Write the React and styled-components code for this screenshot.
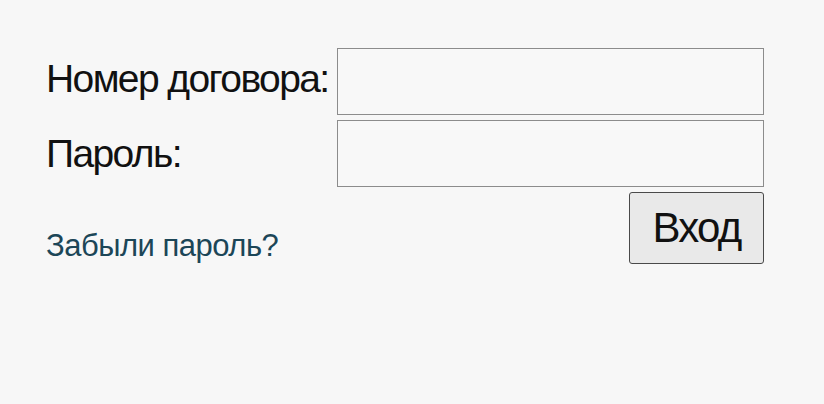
import React from 'react';
import styled, { createGlobalStyle } from 'styled-components';

const GlobalStyle = createGlobalStyle`
  html, body {
    margin: 0;
    padding: 0;
    background: #f7f7f7;
  }
  body {
    font-family: "Liberation Sans", Arial, sans-serif;
  }
`;

const Page = styled.div`
  width: 824px;
  height: 404px;
  box-sizing: border-box;
  padding: 48px 0 0 46px;
  background: #f7f7f7;
`;

const Form = styled.form`
  display: grid;
  grid-template-columns: 291px 427px;
  grid-template-rows: 67px 67px 72px;
  row-gap: 5px;
  margin: 0;
`;

const Label = styled.label`
  align-self: center;
  font-size: 39px;
  letter-spacing: -1.6px;
  color: #111;
  white-space: nowrap;
  margin-top: ${(p) => p.$offset || 0}px;
`;

const Input = styled.input`
  box-sizing: border-box;
  width: 100%;
  height: 100%;
  border: 1px solid #8c8c8c;
  background: #f8f8f8;
  font-size: 30px;
  padding: 0 10px;
  outline: none;
`;

const Footer = styled.div`
  grid-column: 1 / 3;
  display: flex;
  justify-content: space-between;
  align-items: flex-end;
  margin-top: 1px;
`;

const ForgotLink = styled.a`
  font-size: 31px;
  letter-spacing: -0.5px;
  color: #1c4657;
  text-decoration: none;
  margin-bottom: 0;
  cursor: pointer;
`;

const SubmitButton = styled.button`
  box-sizing: border-box;
  width: 135px;
  height: 72px;
  border: 1px solid #4a4a4a;
  border-radius: 3px;
  background: #e9e9e9;
  font-family: "Liberation Sans", Arial, sans-serif;
  font-size: 42px;
  letter-spacing: -1.8px;
  color: #111;
  padding: 0;
  cursor: pointer;
`;

export default function App() {
  return (
    <Page>
      <GlobalStyle />
      <Form onSubmit={(e) => e.preventDefault()}>
        <Label htmlFor="contract" $offset={-6}>Номер договора:</Label>
        <Input id="contract" type="text" />
        <Label htmlFor="password" $offset={0}>Пароль:</Label>
        <Input id="password" type="password" />
        <Footer>
          <ForgotLink>Забыли пароль?</ForgotLink>
          <SubmitButton type="submit">Вход</SubmitButton>
        </Footer>
      </Form>
    </Page>
  );
}
